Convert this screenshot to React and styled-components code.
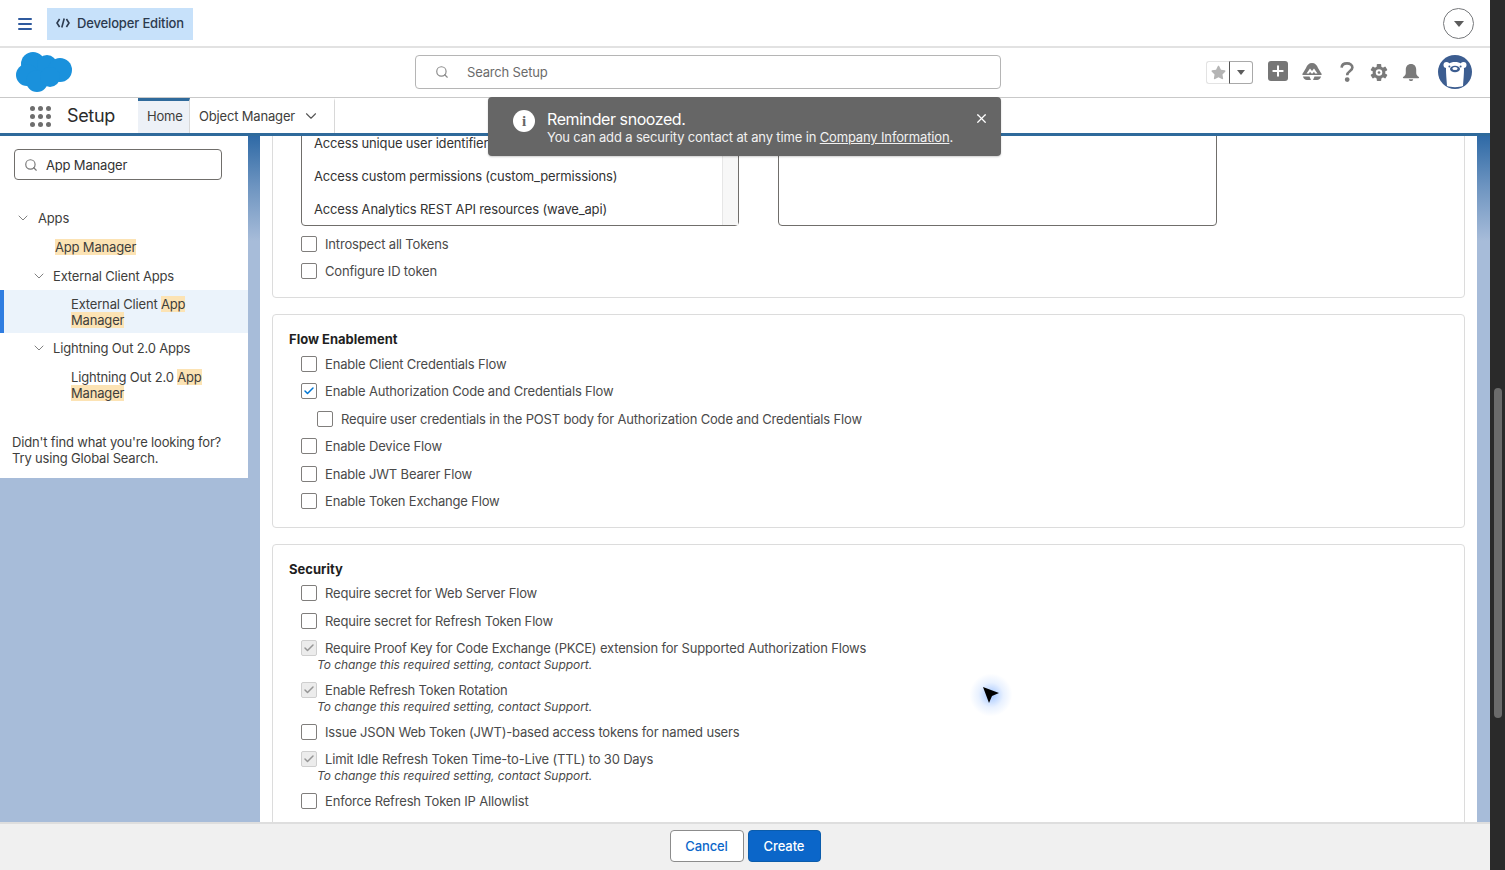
import React from "react";
import styled, { createGlobalStyle } from "styled-components";
import { FaStar } from "react-icons/fa";
import { Search, ChevronDown, X, Plus, Check } from "lucide-react";

const GlobalStyle = createGlobalStyle`
  html, body {
    margin: 0;
    padding: 0;
    height: 100%;
    overflow: hidden;
  }
  body {
    font-family: Inter, "Liberation Sans", Arial, sans-serif;
    font-size: 13px;
    letter-spacing: -0.17px;
    color: #3e3e3c;
  }
`;

const Shell = styled.div`
  display: flex;
  width: 1505px;
  height: 870px;
`;
const Page = styled.div`
  position: relative;
  flex: 1;
  min-width: 0;
  display: flex;
  flex-direction: column;
  background: #fff;
`;
const WindowScroll = styled.div`
  width: 15px;
  background: #2a2a2a;
  padding: 388px 3px 0 4px;
  box-sizing: border-box;
  .thumb {
    height: 330px;
    border-radius: 4px;
    background: #6b6b6b;
  }
`;

/* top strip */
const TopBar = styled.div`
  height: 45px;
  display: flex;
  align-items: center;
  padding: 1px 16px 0 18px;
  border-bottom: 2px solid #e2e2e2;
`;
const Burger = styled.svg`
  width: 14px;
  height: 12px;
  margin-right: 15px;
`;
const EditionChip = styled.div`
  height: 32px;
  width: 146px;
  display: flex;
  align-items: center;
  gap: 7px;
  padding: 0 0 2px 9px;
  box-sizing: border-box;
  background: #c7e1fa;
  color: #2c3a4e;
  font-weight: 500;
  letter-spacing: -0.15px;
`;
const CircleButton = styled.div`
  margin-left: auto;
  width: 29px;
  height: 29px;
  border: 1px solid #77797c;
  border-radius: 50%;
  display: flex;
  align-items: center;
  justify-content: center;
`;
const Caret = styled.span`
  width: 0;
  height: 0;
  border-left: ${(p) => p.$size || 5}px solid transparent;
  border-right: ${(p) => p.$size || 5}px solid transparent;
  border-top: ${(p) => (p.$size || 5) + 1}px solid #5c5c5c;
`;

/* logo + search row */
const HeaderRow = styled.div`
  height: 48px;
  padding-bottom: 1px;
  display: grid;
  grid-template-columns: 415px 586px 1fr;
  align-items: center;
  border-bottom: 1px solid #c9c9c9;
`;
const LogoCell = styled.div`
  padding-left: 15px;
  svg {
    display: block;
  }
`;
const SearchBox = styled.div`
  height: 34px;
  border: 1px solid #b5b5b5;
  border-radius: 4px;
  box-sizing: border-box;
  display: flex;
  align-items: center;
  gap: 18px;
  padding-left: 19px;
  color: #6b6b6b;
  svg {
    color: #8a8a8a;
  }
`;
const HeaderActions = styled.div`
  display: flex;
  align-items: center;
  justify-content: flex-end;
  padding-right: 18px;
`;
const Favorites = styled.div`
  display: flex;
  height: 23px;
  margin-right: 15px;
`;
const StarBox = styled.div`
  width: 22px;
  border: 1px solid #e3e3e3;
  border-right: 0;
  border-radius: 3px 0 0 3px;
  display: flex;
  align-items: center;
  justify-content: center;
  color: #b4b4b4;
`;
const CaretBox = styled.div`
  width: 22px;
  border: 1px solid #a9a9a9;
  border-left-color: #555;
  border-radius: 0 3px 3px 0;
  display: flex;
  align-items: center;
  justify-content: center;
`;
const PlusBox = styled.div`
  width: 20px;
  height: 20px;
  margin: -2px 14px 0 0;
  border-radius: 3px;
  background: #767676;
  color: #fff;
  display: flex;
  align-items: center;
  justify-content: center;
`;
const ActionIcon = styled.div`
  display: flex;
  align-items: center;
  justify-content: center;
  width: ${(p) => p.$w}px;
  margin-right: ${(p) => p.$mr}px;
`;

/* nav row */
const NavBar = styled.div`
  height: 35px;
  display: flex;
  align-items: stretch;
  border-bottom: 3px solid #2f6a9b;
`;
const Waffle = styled.div`
  width: 21px;
  margin: 8px 16px 0 30px;
  height: 21px;
  display: grid;
  grid-template-columns: repeat(3, 5px);
  grid-auto-rows: 5px;
  gap: 3px;
  span {
    border-radius: 50%;
    background: #6e6e6e;
  }
`;
const AppName = styled.div`
  width: 71px;
  font-size: 18px;
  letter-spacing: -0.35px;
  line-height: 36px;
  color: #2b2b2b;
`;
const Tab = styled.div`
  display: flex;
  align-items: center;
  justify-content: space-between;
  padding: 0 ${(p) => (p.$active ? 8 : 14)}px 2px 9px;
  width: ${(p) => (p.$active ? "52px" : "145px")};
  white-space: nowrap;
  box-sizing: border-box;
  background: ${(p) => (p.$active ? "#edf1f7" : "#fff")};
  border-top: 3px solid ${(p) => (p.$active ? "#2f6a9b" : "transparent")};
  border-right: 1px solid #d8d8d8;
  color: #3e3e3c;
  svg {
    color: #555;
  }
`;

/* body */
const Body = styled.div`
  flex: 1;
  min-height: 0;
  display: flex;
  align-items: stretch;
  background: linear-gradient(180deg, #2f6aa6 0, #6d94c0 50px, #a7bcd9 105px);
`;
const Sidebar = styled.aside`
  width: 248px;
  height: 342px;
  background: #fff;
  padding-top: 13px;
  box-sizing: border-box;
  flex-shrink: 0;
`;
const SideSearch = styled.div`
  width: 208px;
  height: 31px;
  margin: 0 0 23px 14px;
  border: 1px solid #706e6b;
  border-radius: 4px;
  box-sizing: border-box;
  display: flex;
  align-items: center;
  gap: 8px;
  padding-left: 9px;
  color: #333;
  svg {
    color: #777;
  }
`;
const TreeHead = styled.div`
  height: ${(p) => p.$h}px;
  display: flex;
  align-items: center;
  padding-left: ${(p) => p.$indent}px;
  gap: ${(p) => p.$gap}px;
  color: #3e3e3c;
  svg {
    color: #777;
    flex-shrink: 0;
  }
`;
const TreeLeaf = styled.div`
  padding: ${(p) => p.$pad || "6px 20px 5px 4px"};
  padding-left: ${(p) => p.$indent}px;
  line-height: 16px;
  color: #3e3e3c;
  background: ${(p) => (p.$selected ? "#ebf3fb" : "transparent")};
  border-left: ${(p) => (p.$selected ? "4px solid #2f7de1" : "0")};
`;
const Mark = styled.mark`
  background: #fce3b4;
  color: inherit;
`;
const SideHelp = styled.div`
  margin: 28px 0 0 12px;
  line-height: 16px;
  color: #3e3e3c;
`;

const MainPanel = styled.main`
  width: 1217px;
  margin-left: 12px;
  padding: 0 12px;
  box-sizing: border-box;
  background: #fff;
  overflow: hidden;
`;
const Card = styled.section`
  border: 1px solid #dcdcdc;
  border-radius: 4px;
  padding: ${(p) => p.$pad || "15px 16px 12px"};
  margin: ${(p) => p.$margin || "0 0 16px"};
`;
const CardTitle = styled.h3`
  margin: 0 0 2px;
  font-size: 13px;
  letter-spacing: 0;
  line-height: 18px;
  font-weight: 700;
  color: #1f1f1f;
`;
const ListRow = styled.div`
  display: flex;
  gap: 39px;
  margin-left: 12px;
  margin-bottom: 4px;
`;
const ListBox = styled.div`
  width: ${(p) => p.$w}px;
  box-sizing: border-box;
  height: 100px;
  border: 1px solid #706e6b;
  border-radius: 4px;
  display: flex;
`;
const ListItems = styled.div`
  flex: 1;
  padding-left: 12px;
  div {
    height: 33px;
    line-height: 33px;
    color: #333;
  }
`;
const ListTrack = styled.div`
  width: 15px;
  background: #f7f7f7;
  border-left: 1px solid #e6e6e6;
`;
const Option = styled.label`
  display: flex;
  align-items: center;
  gap: 8px;
  height: 27.4px;
  margin-left: ${(p) => (p.$nested ? 28 : 12)}px;
  color: #4a4a4a;
`;
const Box = styled.span`
  width: 16px;
  height: 16px;
  box-sizing: border-box;
  border: 1px solid ${(p) => (p.$disabled ? "#cfcfcf" : "#807e7c")};
  border-radius: 2px;
  background: ${(p) => (p.$disabled ? "#ececec" : "#fff")};
  color: ${(p) => (p.$disabled ? "#969696" : "#0176d3")};
  display: flex;
  align-items: center;
  justify-content: center;
  flex-shrink: 0;
`;
const Note = styled.div`
  margin: -3.5px 0 3.5px 28px;
  font-size: 12px;
  letter-spacing: -0.06px;
  line-height: 14.5px;
  font-style: italic;
  color: #4a4a4a;
`;

/* bottom bar */
const Footer = styled.footer`
  height: 48px;
  box-sizing: border-box;
  border-top: 2px solid #dedede;
  background: #f0f0f0;
  display: flex;
  align-items: center;
  justify-content: center;
  gap: 4px;
  padding: 0 0 2px 0;
`;
const Button = styled.button`
  height: 32px;
  width: ${(p) => (p.$primary ? 73 : 74)}px;
  border-radius: 4px;
  border: 1px solid ${(p) => (p.$primary ? "#0b5cab" : "#8c8c8c")};
  background: ${(p) => (p.$primary ? "#0b66c9" : "#fff")};
  color: ${(p) => (p.$primary ? "#fff" : "#0b66c9")};
  font: 500 13px Inter, "Liberation Sans", Arial, sans-serif;
  letter-spacing: -0.1px;
`;

/* things floating over the page */
const Toast = styled.div`
  position: absolute;
  left: 488px;
  top: 97px;
  width: 513px;
  height: 59px;
  border-radius: 4px;
  background: #666;
  color: #fff;
  display: flex;
  align-items: flex-start;
  padding: 13px 0 0 25px;
  box-sizing: border-box;
  box-shadow: 0 1px 2px rgba(0, 0, 0, 0.2);
`;
const ToastIcon = styled.div`
  width: 22px;
  height: 22px;
  border-radius: 50%;
  background: #fff;
  color: #666;
  margin-right: 12px;
  display: flex;
  align-items: center;
  justify-content: center;
  font: 700 15px "Liberation Serif", serif;
`;
const ToastText = styled.div`
  flex: 1;
  h4 {
    margin: 0;
    font-size: 16px;
    letter-spacing: -0.42px;
    line-height: 18px;
    font-weight: 400;
  }
  p {
    margin: 0;
    line-height: 18px;
    letter-spacing: -0.15px;
    color: #f1f1f1;
  }
  a {
    color: inherit;
    text-decoration: underline;
  }
`;
const ToastClose = styled.div`
  padding: 1px 12px 0 0;
  color: #fff;
`;
const Pointer = styled.div`
  position: absolute;
  left: 968px;
  top: 672px;
  width: 46px;
  height: 46px;
  border-radius: 50%;
  background: radial-gradient(circle, rgba(70, 140, 255, 0.5) 0, rgba(70, 140, 255, 0.12) 38%, rgba(70, 140, 255, 0) 66%);
  display: flex;
  align-items: center;
  justify-content: center;
`;

const Logo = () => (
  <svg width="58" height="42" viewBox="0 0 58 42" fill="#1a91dc">
    <circle cx="18" cy="13" r="12" />
    <circle cx="32" cy="14" r="10" />
    <circle cx="45" cy="19" r="12" />
    <circle cx="12" cy="24" r="11" />
    <circle cx="22" cy="30" r="11" />
    <circle cx="35" cy="26" r="10" />
  </svg>
);

const TrailIcon = () => (
  <svg width="20" height="18" viewBox="0 0 20 18" fill="#7a7a7a">
    <path d="M10 0C7 0 5 2 4 5L1 10C0 11 0 12 1 12H19C20 12 20 11 19 10L16 5C15 2 13 0 10 0Z" />
    <path d="M1 13.5H7.5L9 17H5C3 17 1.5 15.5 1 13.5ZM11 17L12.5 13.5H19C18.5 15.5 17 17 15 17Z" />
    <path d="M4.5 10.5L8 5.5L10 8L12 5.5L15.5 10.5H13L12 8.8L10.5 10.5H9.5L8 8.8L7 10.5Z" fill="#fff" />
  </svg>
);

const HelpIcon = () => (
  <svg width="14" height="20" viewBox="0 0 14 20" fill="none" stroke="#7a7a7a" strokeWidth="2.6">
    <path d="M1.6 5.6C1.8 3 4 1.4 7 1.4C10 1.4 12.4 3 12.4 5.6C12.4 9 7.2 9 7.2 13.2" />
    <circle cx="7.2" cy="17.6" r="1.1" fill="#7a7a7a" />
  </svg>
);

const GearIcon = () => (
  <svg width="19" height="19" viewBox="0 0 20 20" fill="#7a7a7a">
    <circle cx="10" cy="10" r="7" />
    {[0, 60, 120, 180, 240, 300].map((a) => (
      <rect key={a} x="7.5" y="0.5" width="5" height="5" rx="0.8" transform={`rotate(${a} 10 10)`} />
    ))}
    <circle cx="10" cy="10" r="3.6" fill="#fff" />
    <circle cx="10" cy="10" r="1.5" />
  </svg>
);

const BellIcon = () => (
  <svg width="19" height="19" viewBox="0 0 19 19" fill="#7a7a7a">
    <path d="M9.5 0.5C6 0.5 4 3 4 6.5V10C4 12 2.8 13 1.2 14.2C0.6 14.7 1 15.5 1.7 15.5H17.3C18 15.5 18.4 14.7 17.8 14.2C16.2 13 15 12 15 10V6.5C15 3 13 0.5 9.5 0.5Z" />
    <path d="M7.2 16.6H11.8C11.6 17.9 10.7 18.6 9.5 18.6C8.3 18.6 7.4 17.9 7.2 16.6Z" />
  </svg>
);

const Bear = () => (
  <svg width="34" height="34" viewBox="0 0 34 34">
    <defs>
      <clipPath id="bear-clip">
        <circle cx="17" cy="17" r="17" />
      </clipPath>
    </defs>
    <g clipPath="url(#bear-clip)">
      <rect width="34" height="34" fill="#3c5d90" />
      <circle cx="8.5" cy="10" r="3" fill="#fff" />
      <circle cx="25.5" cy="10" r="3" fill="#fff" />
      <path d="M8 14C8 9 12 7 17 7C22 7 26 9 26 14C26 19 25.5 24 25 31C21 32.5 13 32.5 9 31C8.5 24 8 19 8 14Z" fill="#fff" />
      <ellipse cx="17" cy="14" rx="5" ry="3.2" fill="#3c5d90" />
      <ellipse cx="17" cy="13.6" rx="2.6" ry="1.5" fill="#fff" />
      <circle cx="11.4" cy="11.4" r="1" fill="#3c5d90" />
      <circle cx="22.6" cy="11.4" r="1" fill="#3c5d90" />
    </g>
  </svg>
);

const Opt = ({ label, checked, disabled, nested }) => (
  <Option $nested={nested}>
    <Box $disabled={disabled}>{checked && <Check size={12} strokeWidth={3} />}</Box>
    {label}
  </Option>
);

const flowOptions = [
  { label: "Enable Client Credentials Flow" },
  { label: "Enable Authorization Code and Credentials Flow", checked: true },
  { label: "Require user credentials in the POST body for Authorization Code and Credentials Flow", nested: true },
  { label: "Enable Device Flow" },
  { label: "Enable JWT Bearer Flow" },
  { label: "Enable Token Exchange Flow" },
];

const NOTE = "To change this required setting, contact Support.";
const securityOptions = [
  { label: "Require secret for Web Server Flow" },
  { label: "Require secret for Refresh Token Flow" },
  { label: "Require Proof Key for Code Exchange (PKCE) extension for Supported Authorization Flows", checked: true, disabled: true, note: NOTE },
  { label: "Enable Refresh Token Rotation", checked: true, disabled: true, note: NOTE },
  { label: "Issue JSON Web Token (JWT)-based access tokens for named users" },
  { label: "Limit Idle Refresh Token Time-to-Live (TTL) to 30 Days", checked: true, disabled: true, note: NOTE },
  { label: "Enforce Refresh Token IP Allowlist" },
];

export default function App() {
  return (
    <>
      <GlobalStyle />
      <Shell>
        <Page>
          <TopBar>
            <Burger viewBox="0 0 14 12" fill="#2f5a9e">
              <rect width="14" height="2" y="0" rx="1" />
              <rect width="14" height="2" y="5" rx="1" />
              <rect width="14" height="2" y="10" rx="1" />
            </Burger>
            <EditionChip>
              <svg width="14" height="10" viewBox="0 0 14 10" fill="none" stroke="#2c3a4e" strokeWidth="1.6">
                <path d="M3.6 1L1 5L3.6 9M10.4 1L13 5L10.4 9M8.2 0.5L5.8 9.5" />
              </svg>
              Developer Edition
            </EditionChip>
            <CircleButton>
              <Caret />
            </CircleButton>
          </TopBar>

          <HeaderRow>
            <LogoCell>
              <Logo />
            </LogoCell>
            <SearchBox>
              <Search size={14} />
              Search Setup
            </SearchBox>
            <HeaderActions>
              <Favorites>
                <StarBox>
                  <FaStar size={15} />
                </StarBox>
                <CaretBox>
                  <Caret $size={4} />
                </CaretBox>
              </Favorites>
              <PlusBox>
                <Plus size={16} strokeWidth={3} />
              </PlusBox>
              <ActionIcon $w={20} $mr={18}>
                <TrailIcon />
              </ActionIcon>
              <ActionIcon $w={14} $mr={16}>
                <HelpIcon />
              </ActionIcon>
              <ActionIcon $w={18} $mr={14}>
                <GearIcon />
              </ActionIcon>
              <ActionIcon $w={18} $mr={18}>
                <BellIcon />
              </ActionIcon>
              <Bear />
            </HeaderActions>
          </HeaderRow>

          <NavBar>
            <Waffle>
              {Array.from({ length: 9 }).map((_, i) => (
                <span key={i} />
              ))}
            </Waffle>
            <AppName>Setup</AppName>
            <Tab $active>Home</Tab>
            <Tab>
              Object Manager
              <ChevronDown size={18} strokeWidth={1.5} />
            </Tab>
          </NavBar>

          <Body>
            <Sidebar>
              <SideSearch>
                <Search size={14} />
                App Manager
              </SideSearch>
              <TreeHead $h={30} $indent={15} $gap={7}>
                <ChevronDown size={16} strokeWidth={1.4} />
                Apps
              </TreeHead>
              <TreeLeaf $indent={55} $pad="6px 0">
                <Mark>App Manager</Mark>
              </TreeLeaf>
              <TreeHead $h={29} $indent={31} $gap={6}>
                <ChevronDown size={16} strokeWidth={1.4} />
                External Client Apps
              </TreeHead>
              <TreeLeaf $selected $indent={67}>
                External Client <Mark>App</Mark>
                <br />
                <Mark>Manager</Mark>
              </TreeLeaf>
              <TreeHead $h={30} $indent={31} $gap={6}>
                <ChevronDown size={16} strokeWidth={1.4} />
                Lightning Out 2.0 Apps
              </TreeHead>
              <TreeLeaf $indent={71}>
                Lightning Out 2.0 <Mark>App</Mark>
                <br />
                <Mark>Manager</Mark>
              </TreeLeaf>
              <SideHelp>
                Didn't find what you're looking for?
                <br />
                Try using Global Search.
              </SideHelp>
            </Sidebar>

            <MainPanel>
              <Card $pad="0 16px 12px" $margin="-11px 0 16.5px">
                <ListRow>
                  <ListBox $w={438}>
                    <ListItems>
                      <div>Access unique user identifier (openid)</div>
                      <div>Access custom permissions (custom_permissions)</div>
                      <div>Access Analytics REST API resources (wave_api)</div>
                    </ListItems>
                    <ListTrack />
                  </ListBox>
                  <ListBox $w={439} />
                </ListRow>
                <Opt label="Introspect all Tokens" />
                <Opt label="Configure ID token" />
              </Card>

              <Card>
                <CardTitle>Flow Enablement</CardTitle>
                {flowOptions.map((o) => (
                  <Opt key={o.label} {...o} />
                ))}
              </Card>

              <Card>
                <CardTitle>Security</CardTitle>
                {securityOptions.map((o) => (
                  <React.Fragment key={o.label}>
                    <Opt {...o} />
                    {o.note && <Note>{o.note}</Note>}
                  </React.Fragment>
                ))}
              </Card>
            </MainPanel>
          </Body>

          <Footer>
            <Button>Cancel</Button>
            <Button $primary>Create</Button>
          </Footer>

          <Toast>
            <ToastIcon>i</ToastIcon>
            <ToastText>
              <h4>Reminder snoozed.</h4>
              <p>
                You can add a security contact at any time in <a href="#company">Company Information</a>.
              </p>
            </ToastText>
            <ToastClose>
              <X size={15} />
            </ToastClose>
          </Toast>

          <Pointer>
            <svg width="18" height="18" viewBox="0 0 18 18" fill="#000">
              <path d="M1 1L17 7L10 10L7 17Z" />
            </svg>
          </Pointer>
        </Page>
        <WindowScroll>
          <div className="thumb" />
        </WindowScroll>
      </Shell>
    </>
  );
}
